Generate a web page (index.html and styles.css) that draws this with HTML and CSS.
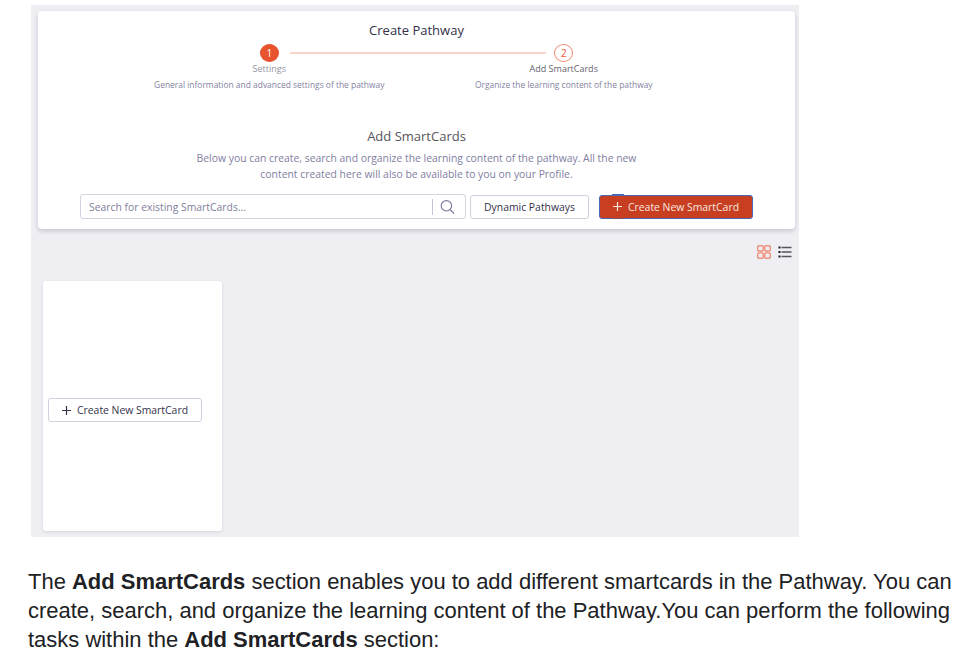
FILE: index.html
```html
<!DOCTYPE html>
<html lang="en">
<head>
<meta charset="utf-8">
<title>Create Pathway</title>
<link rel="stylesheet" href="styles.css">
</head>
<body>
<main class="panel">
  <section class="pathway">
    <h1 class="title"><span>Create Pathway</span></h1>
    <ol class="steps">
      <li class="step">
        <span class="badge badge-done">1</span>
        <span class="step-name muted">Settings</span>
        <span class="step-text">General information and advanced settings of the pathway</span>
      </li>
      <li class="step">
        <span class="badge">2</span>
        <span class="step-name">Add SmartCards</span>
        <span class="step-text">Organize the learning content of the pathway</span>
      </li>
    </ol>
    <h2 class="subtitle"><span>Add SmartCards</span></h2>
    <p class="intro"><span>Below you can create, search and organize the learning content of the pathway. All the new</span><br><span>content created here will also be available to you on your Profile.</span></p>
    <div class="tools">
      <div class="search">
        <span class="placeholder">Search for existing SmartCards...</span>
        <span class="search-icon"><svg width="16" height="16" viewBox="0 0 16 16" fill="none" stroke="#77769b" stroke-width="1.1"><circle cx="6.4" cy="6.8" r="5.2"/><path d="M10.2 10.7l3.8 3.8"/></svg></span>
      </div>
      <button class="btn dynamic"><span>Dynamic Pathways</span></button>
      <button class="btn create primary">
        <svg class="plus" width="9" height="9" viewBox="0 0 9 9" stroke="currentColor" stroke-width="1.2"><path d="M4.5 0v9M0 4.5h9"/></svg>
        <span>Create New SmartCard</span>
      </button>
    </div>
  </section>
  <div class="views">
    <svg width="14" height="14" viewBox="0 0 14 14" fill="none" stroke="#ef8f7c" stroke-width="1.4"><rect x=".7" y=".7" width="5.5" height="5.3" rx="1"/><rect x="7.8" y=".7" width="5.5" height="5.3" rx="1"/><rect x=".7" y="7.9" width="5.5" height="5.3" rx="1"/><rect x="7.8" y="7.9" width="5.5" height="5.3" rx="1"/></svg>
    <svg width="14" height="12" viewBox="0 0 14 12"><path d="M0.5 1.5h2M0.5 6h2M0.5 10.5h2" stroke="#15151c" stroke-width="1.8"/><path d="M3.5 1.5H13.5M3.5 6H13.5M3.5 10.5H13.5" stroke="#55555c" stroke-width="1.3"/></svg>
  </div>
  <section class="smartcard">
    <button class="btn create">
      <svg class="plus" width="9" height="9" viewBox="0 0 9 9" stroke="currentColor" stroke-width="1.2"><path d="M4.5 0v9M0 4.5h9"/></svg>
      <span>Create New SmartCard</span>
    </button>
  </section>
</main>
<p class="caption">The <b>Add SmartCards</b> section enables you to add different smartcards in the Pathway. You can<br>create, search, and organize the learning content of the Pathway.You can perform the following<br>tasks within the <b>Add SmartCards</b> section:</p>
</body>
</html>
```
FILE: styles.css
```css
* { box-sizing: border-box; }
body {
  margin: 0;
  padding-top: 5px;
  height: 652px;
  overflow: hidden;
  background: #fff;
  font-family: "Open Sans", "Liberation Sans", sans-serif;
}
h1, h2, p, ol { margin: 0; padding: 0; font-weight: 400; }
.panel {
  width: 768px;
  height: 532px;
  margin-left: 31px;
  padding: 6px 4px 0 7px;
  background: #efeef3;
}
.pathway {
  height: 218px;
  padding: 9px 42px 0;
  background: #fff;
  border-radius: 4px;
  box-shadow: 0 2px 4px rgba(60, 60, 90, .22);
  text-align: center;
}
.title {
  height: 20px;
  font-size: 13px;
  line-height: 20px;
  color: #33324a;
}
.steps {
  display: flex;
  width: 589px;
  height: 76px;
  margin: 3px auto 0;
  list-style: none;
}
.step {
  position: relative;
  flex: 1;
  display: flex;
  flex-direction: column;
  align-items: center;
}
.step:first-child::after {
  content: "";
  position: absolute;
  left: 168px;
  top: 9px;
  width: 256px;
  height: 2px;
  background: #f9d3c9;
}
.badge {
  width: 19px;
  height: 18px;
  margin-top: 1px;
  border: 1px solid #f08d77;
  border-radius: 50%;
  font-size: 10px;
  line-height: 16px;
  color: #e8552f;
}
.badge-done { background: #e8522d; border-color: #e8522d; color: #fff; }
.step-name {
  font-size: 9px;
  line-height: 14px;
  color: #66666f;
}
.muted { color: #9494a4; }
.step-text {
  margin-top: 2px;
  font-size: 8.44px;
  line-height: 14px;
  color: #84839f;
  white-space: nowrap;
}
.subtitle {
  margin-top: 7px;
  font-size: 13px;
  line-height: 20px;
  color: #55555c;
}
.intro {
  margin-top: 4px;
  font-size: 10.38px;
  line-height: 16px;
  color: #7f7e9f;
}
.tools { display: flex; align-items: center; margin-top: 12px; }
.search {
  display: flex;
  align-items: center;
  width: 386px;
  height: 25px;
  padding-left: 8px;
  border: 1px solid #d4d3e2;
  border-radius: 3px;
}
.placeholder {
  flex: 1;
  text-align: left;
  font-size: 10.38px;
  color: #7f7e9b;
}
.search-icon {
  display: flex;
  width: 33px;
  height: 16px;
  padding-left: 7px;
  border-left: 1px solid #c4c3d6;
}
.btn {
  display: flex;
  align-items: center;
  justify-content: center;
  height: 24px;
  padding: 0;
  border: 1px solid #d1d0df;
  border-radius: 3px;
  background: #fff;
  font-family: inherit;
  font-size: 10.4px;
  color: #33324a;
}
.dynamic { width: 119px; margin-left: 4px; }
.create { width: 154px; gap: 6px; }
.primary {
  position: relative;
  margin-left: 10px;
  border-color: #4869b4;
  background: #c73f20;
  color: #fbe7e1;
}
.primary::before, .primary::after {
  content: "";
  position: absolute;
  left: 12px;
  width: 12px;
  height: 1px;
  background: #4869b4;
}
.primary::before { top: -2px; }
.primary::after { bottom: -1px; background: #7d5470; }
.views {
  display: flex;
  align-items: center;
  justify-content: flex-end;
  gap: 7px;
  height: 14px;
  margin: 16px 3px 0 0;
}
.smartcard {
  display: flex;
  align-items: center;
  width: 179px;
  height: 250px;
  margin: 22px 0 0 5px;
  padding: 8px 0 0 5px;
  border-radius: 3px;
  background: #fff;
  box-shadow: 0 1px 3px rgba(60, 60, 90, .14);
}
.caption {
  margin: 30px 0 0 28px;
  font-family: "Liberation Sans", sans-serif;
  font-size: 21.98px;
  line-height: 29px;
  color: #202124;
  white-space: nowrap;
}
```
